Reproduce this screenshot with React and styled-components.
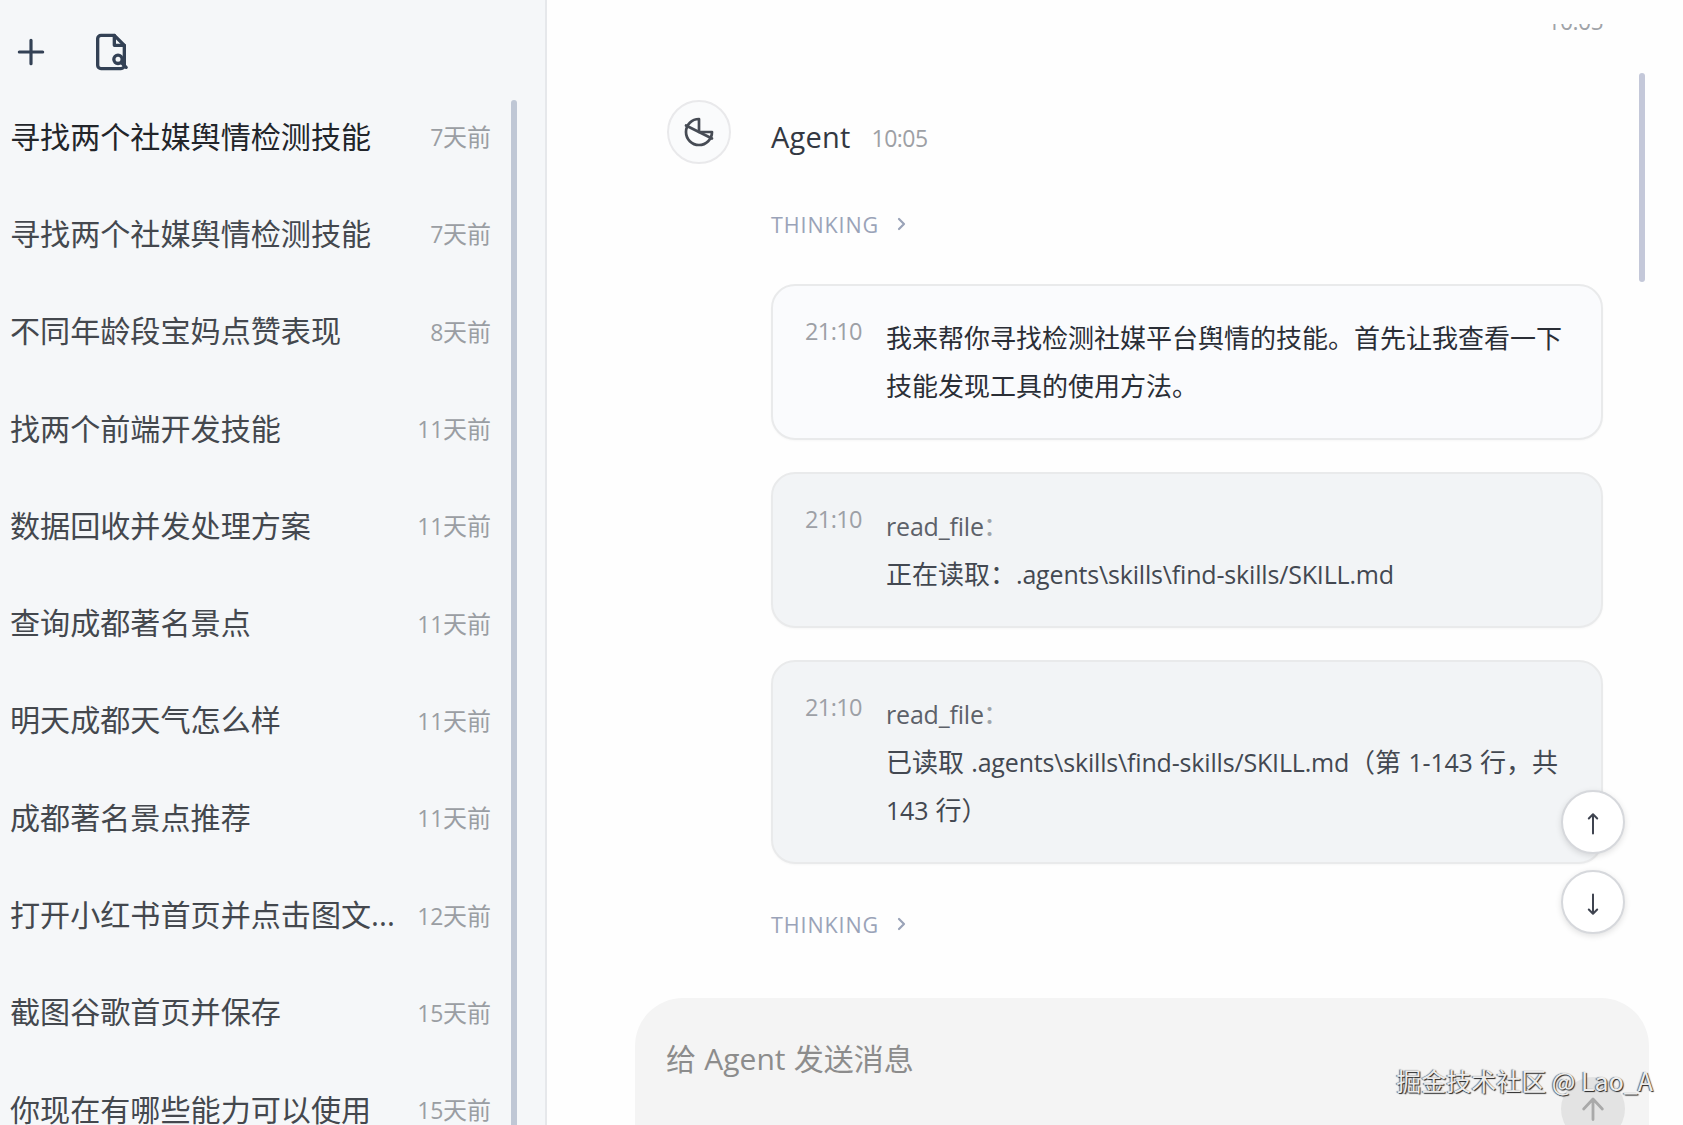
import React from 'react'
import styled, { createGlobalStyle } from 'styled-components'

const sessions = [
  { title: '寻找两个社媒舆情检测技能', days: '7', active: true },
  { title: '寻找两个社媒舆情检测技能', days: '7' },
  { title: '不同年龄段宝妈点赞表现', days: '8' },
  { title: '找两个前端开发技能', days: '11' },
  { title: '数据回收并发处理方案', days: '11' },
  { title: '查询成都著名景点', days: '11' },
  { title: '明天成都天气怎么样', days: '11' },
  { title: '成都著名景点推荐', days: '11' },
  { title: '打开小红书首页并点击图文...', days: '12' },
  { title: '截图谷歌首页并保存', days: '15' },
  { title: '你现在有哪些能力可以使用', days: '15' },
]

const PlusIcon = () => (
  <Icon viewBox='0 0 24 24' $size={40} $stroke={1.9}>
    <path d='M12 5v14M5 12h14' />
  </Icon>
)

const FileSearchIcon = () => (
  <Icon viewBox='0 0 24 24' $size={40} $stroke={2}>
    <path d='M14 2H6a2 2 0 0 0-2 2v16a2 2 0 0 0 2 2h12a2 2 0 0 0 2-2V8Z' />
    <path d='M14 2v6h6' />
    <circle cx='16.2' cy='16.4' r='2.5' />
    <path d='m18.2 18.4 2.9 2.8' />
  </Icon>
)

const AgentIcon = () => (
  <Icon viewBox='0 0 32 32' $size={32} $stroke={2.7}>
    <path d='M16 3A13 13 0 1 0 29 16H16Z' />
    <path d='m3 9.5 26 13' />
  </Icon>
)

const ChevronIcon = () => (
  <Icon viewBox='0 0 10 14' $size={14} $stroke={2.2}>
    <path d='m2 2 5 5-5 5' />
  </Icon>
)

const ArrowIcon = ({ down }) => (
  <Icon viewBox='0 0 24 24' $size={24} $stroke={2} $flip={down}>
    <path d='M12 2.5v19M7.8 6.5 12 2.3l4.2 4.2' />
  </Icon>
)

const Thinking = () => (
  <ThinkingRow>
    THINKING
    <ChevronIcon />
  </ThinkingRow>
)

const App = () => {
  return (
    <Layout>
      <GlobalStyle />
      <Sidebar>
        <Toolbar>
          <PlusIcon />
          <FileSearchIcon />
        </Toolbar>
        <SessionList>
          {sessions.map((item, index) => (
            <Session key={index}>
              <SessionTitle $active={item.active}>{item.title}</SessionTitle>
              <SessionTime>
                <Digits>{item.days}</Digits>天前
              </SessionTime>
            </Session>
          ))}
        </SessionList>
        <SidebarThumb />
      </Sidebar>

      <Main>
        <Messages>
          <UserTime>10:05</UserTime>
          <Message>
            <Avatar>
              <AgentIcon />
            </Avatar>
            <Body>
              <Head>
                <Name>Agent</Name>
                <HeadTime>10:05</HeadTime>
              </Head>
              <Thinking />
              <Cards>
                <Card>
                  <CardTime>21:10</CardTime>
                  <CardText>
                    我来帮你寻找检测社媒平台舆情的技能。首先让我查看一下技能发现工具的使用方法。
                  </CardText>
                </Card>
                <Card $tool>
                  <CardTime>21:10</CardTime>
                  <CardText $tool>
                    <ToolName>
                      <Latin>read_file</Latin>
                      <i>：</i>
                    </ToolName>
                    正在读取：<Latin>.agents\skills\find-skills/SKILL.md</Latin>
                  </CardText>
                </Card>
                <Card $tool>
                  <CardTime>21:10</CardTime>
                  <CardText $tool>
                    <ToolName>
                      <Latin>read_file</Latin>
                      <i>：</i>
                    </ToolName>
                    已读取 <Latin>.agents\skills\find-skills/SKILL.md</Latin>（第{' '}
                    <Latin>1-143</Latin> 行，共 <Latin>143</Latin> 行）
                  </CardText>
                </Card>
              </Cards>
              <Thinking />
            </Body>
          </Message>
        </Messages>
        <MainThumb />
        <Jumps>
          <JumpButton>
            <ArrowIcon />
          </JumpButton>
          <JumpButton>
            <ArrowIcon down />
          </JumpButton>
        </Jumps>
        <Composer>
          <Placeholder>给 Agent 发送消息</Placeholder>
          <SendButton>
            <Icon viewBox='0 0 24 24' $size={28} $stroke={2.4}>
              <path d='M12 21V4M4 12l8-8.5 8 8.5' />
            </Icon>
          </SendButton>
        </Composer>
      </Main>
      <Watermark>掘金技术社区 @ Lao_A</Watermark>
    </Layout>
  )
}

const GlobalStyle = createGlobalStyle`
  * {
    box-sizing: border-box;
  }
  body {
    margin: 0;
    overflow: hidden;
    background: #fefefe;
    font-family: 'Open Sans', 'Noto Sans CJK SC', sans-serif;
  }
`

const Layout = styled.div`
  position: relative;
  display: flex;
  width: 100%;
  height: 100vh;
  overflow: hidden;
`

const Icon = styled.svg`
  display: block;
  flex: none;
  height: ${({ $size }) => $size}px;
  fill: none;
  stroke: currentColor;
  stroke-width: ${({ $stroke }) => $stroke};
  stroke-linecap: round;
  stroke-linejoin: round;
  transform: ${({ $flip }) => ($flip ? 'rotate(180deg)' : 'none')};
`

/* Latin runs sit slightly smaller than the Chinese text around them */
const Latin = styled.span`
  font-size: 0.9615em;
  letter-spacing: -0.17px;
`

const Sidebar = styled.aside`
  position: relative;
  flex: none;
  width: 547px;
  background: #f5f7f9;
  border-right: 2px solid #e6e8eb;
`

const Toolbar = styled.div`
  display: flex;
  gap: 40px;
  padding: 32px 11px 16px;
  color: #334155;
`

const SessionList = styled.div`
  padding: 0 54px 0 10px;
`

const Session = styled.div`
  display: flex;
  align-items: center;
  justify-content: space-between;
  height: 97.3px;
`

const SessionTitle = styled.span`
  white-space: nowrap;
  font-size: 30.1px;
  line-height: 44px;
  color: ${({ $active }) => ($active ? '#22252a' : '#44484e')};
`

const SessionTime = styled.span`
  flex: none;
  padding-bottom: 2px;
  font-size: 24px;
  color: #9a9ea3;
`

const Digits = styled.span`
  font-size: 23px;
  letter-spacing: -0.3px;
`

const Thumb = styled.div`
  position: absolute;
  width: 6px;
  border-radius: 3px;
`

const SidebarThumb = styled(Thumb)`
  top: 100px;
  right: 28px;
  bottom: -10px;
  background: #bfc7d5;
`

const MainThumb = styled(Thumb)`
  top: 73px;
  right: 38px;
  height: 209px;
  background: #c4c8d9;
`

const Main = styled.main`
  position: relative;
  display: flex;
  flex: 1;
  flex-direction: column;
  padding: 24px 34px 0 88px;
`

const Messages = styled.div`
  flex: 1;
  overflow: hidden;
  padding: 0 46px 0 32px;
`

const UserTime = styled.div`
  height: 77px;
  margin-top: -19px;
  text-align: right;
  font-size: 23px;
  line-height: 32px;
  letter-spacing: -0.6px;
  color: #a0a3a8;
`

const Message = styled.div`
  display: flex;
  gap: 40px;
  margin-top: 18px;
`

const Avatar = styled.div`
  display: flex;
  align-items: center;
  justify-content: center;
  flex: none;
  width: 64px;
  height: 64px;
  border: 2px solid #e9e9eb;
  border-radius: 50%;
  background: #fafbfc;
  color: #464b54;
`

const Body = styled.div`
  flex: 1;
  min-width: 0;
`

const Head = styled.div`
  display: flex;
  align-items: baseline;
  gap: 21px;
  height: 76px;
  padding-top: 17px;
`

const Name = styled.span`
  font-size: 29px;
  line-height: 40px;
  letter-spacing: 0.2px;
  color: #333842;
`

const HeadTime = styled.span`
  position: relative;
  top: -1px;
  font-size: 23px;
  line-height: 32px;
  letter-spacing: -0.5px;
  color: #9da0a5;
`

const ThinkingRow = styled.div`
  display: flex;
  align-items: center;
  gap: 18px;
  height: 32px;
  margin: 32px 0 44px;
  font-size: 21.5px;
  letter-spacing: 0.9px;
  color: #9aa3b8;
`

const Cards = styled.div`
  display: flex;
  flex-direction: column;
  gap: 32px;
  margin-bottom: 44px;
`

const Card = styled.div`
  display: flex;
  padding: 28px 32px;
  border: 2px solid #e9eaeb;
  border-radius: 24px;
  background: ${({ $tool }) => ($tool ? '#f2f4f6' : '#fafbfd')};
  box-shadow: 0 1px 2px rgba(0, 0, 0, 0.03);
`

const CardTime = styled.span`
  flex: none;
  width: 81px;
  font-size: 23.5px;
  line-height: 34px;
  letter-spacing: -0.6px;
  color: #9da0a6;
`

const CardText = styled.div`
  flex: 1;
  margin-right: -6px;
  font-size: 26px;
  line-height: 48px;
  word-spacing: 0.5px;
  color: ${({ $tool }) => ($tool ? '#434851' : '#2a2e36')};
`

const ToolName = styled.div`
  color: #5d6169;

  i {
    margin-left: -1px;
    font-style: normal;
    color: #a0a4aa;
  }
`

const Jumps = styled.div`
  position: absolute;
  right: 58px;
  top: 790px;
  display: flex;
  flex-direction: column;
  gap: 16px;
`

const JumpButton = styled.div`
  display: flex;
  align-items: center;
  justify-content: center;
  width: 64px;
  height: 64px;
  padding-top: 3px;
  border: 2px solid #d6d8dc;
  border-radius: 50%;
  background: #fff;
  color: #3f4450;
  box-shadow: 0 2px 6px rgba(0, 0, 0, 0.12);
`

const Composer = styled.div`
  display: flex;
  flex: none;
  justify-content: space-between;
  height: 127px;
  padding: 39px 24px 0 31px;
  border-radius: 48px 48px 0 0;
  background: #f4f4f4;
`

const Placeholder = styled.div`
  font-size: 30px;
  line-height: 44px;
  word-spacing: 0.5px;
  color: #8c8c8c;
`

const SendButton = styled.div`
  display: flex;
  align-items: center;
  justify-content: center;
  flex: none;
  width: 64px;
  height: 64px;
  margin-top: 40px;
  border-radius: 50%;
  background: #e3e3e3;
  color: #a9a9a9;
`

const Watermark = styled.div`
  position: absolute;
  right: 30px;
  bottom: 27px;
  font-family: 'Noto Sans CJK SC', sans-serif;
  font-size: 25px;
  line-height: 36px;
  color: #ececec;
  text-shadow: 1px 1px 1px #222, -1px 0 1px #666;
`

export default App
